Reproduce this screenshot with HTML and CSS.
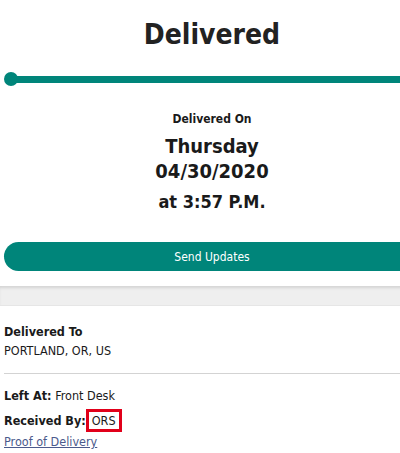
FILE: index.html
```html
<!DOCTYPE html>
<html lang="en">
<head>
    <meta charset="UTF-8">
    <meta name="viewport" content="width=device-width, initial-scale=1.0">
    <title>Delivered</title>
    <link rel="stylesheet" href="styles.css">
</head>
<body>
    <div class="page">
        <div class="status">
            <h1 class="status-title">Delivered</h1>
            <div class="progress">
                <span class="progress-dot"></span>
                <span class="progress-bar"></span>
            </div>
            <div class="delivered-on">
                <div class="label">Delivered On</div>
                <div class="date">Thursday<br>04/30/2020</div>
                <div class="time">at 3:57 P.M.</div>
            </div>
            <button class="btn-updates">Send Updates</button>
        </div>

        <div class="divider-band"></div>

        <div class="details">
            <div class="detail-block">
                <div class="detail-head">Delivered To</div>
                <div>PORTLAND, OR, US</div>
            </div>
            <hr class="rule">
            <div class="detail-row"><b>Left At:</b> Front Desk</div>
            <div class="detail-row"><b>Received By:</b><span class="highlight">ORS</span></div>
            <a href="#" class="pod-link">Proof of Delivery</a>
        </div>
    </div>
</body>
</html>
```

FILE: styles.css
```css
html, body {
    margin: 0;
    overflow-x: hidden;
    background: #fff;
    font-family: "DejaVu Sans Condensed", "DejaVu Sans", sans-serif;
    color: #1a1a1a;
}

.page {
    width: 420px;
}

.status {
    padding-left: 4px;
    text-align: center;
}

.status-title {
    margin: 0;
    padding-top: 17px;
    font-size: 28px;
    line-height: 36px;
    font-weight: bold;
    color: #222;
}

.progress {
    display: flex;
    align-items: center;
    margin-top: 19px;
    height: 14px;
}

.progress-dot {
    width: 14px;
    height: 14px;
    border-radius: 50%;
    background: #00857a;
    flex: none;
}

.progress-bar {
    flex: 1;
    height: 7px;
    margin-left: -4px;
    background: #00857a;
}

.delivered-on {
    margin-top: 25px;
}

.delivered-on .label {
    font-size: 12px;
    font-weight: bold;
    line-height: 16px;
}

.delivered-on .date {
    margin-top: 7px;
    font-size: 20px;
    font-weight: bold;
    line-height: 25px;
}

.delivered-on .time {
    margin-top: 5px;
    font-size: 18px;
    font-weight: bold;
    line-height: 26px;
}

.btn-updates {
    display: block;
    width: 100%;
    height: 29px;
    margin-top: 27px;
    border: none;
    border-radius: 15px;
    background: #00857a;
    color: #fff;
    font-family: inherit;
    font-size: 12px;
}

.divider-band {
    height: 19px;
    margin-top: 15px;
    background: #efefef;
    border-bottom: 1px solid #e6e6e6;
    box-shadow: inset 0 3px 3px -1px #d4d4d4;
}

.details {
    padding: 16px 0 0 4px;
    font-size: 12.5px;
    line-height: 19px;
}

.detail-head {
    font-weight: bold;
}

.rule {
    margin: 13px 0 12px;
    border: none;
    border-top: 1px solid #d3d3d3;
}

.detail-row {
    height: 19px;
    margin-bottom: 4px;
}

.highlight {
    display: inline-block;
    border: 3px solid #e1001a;
    padding: 0 3px;
    line-height: 17px;
}

.pod-link {
    color: #4b5a8c;
}
```
